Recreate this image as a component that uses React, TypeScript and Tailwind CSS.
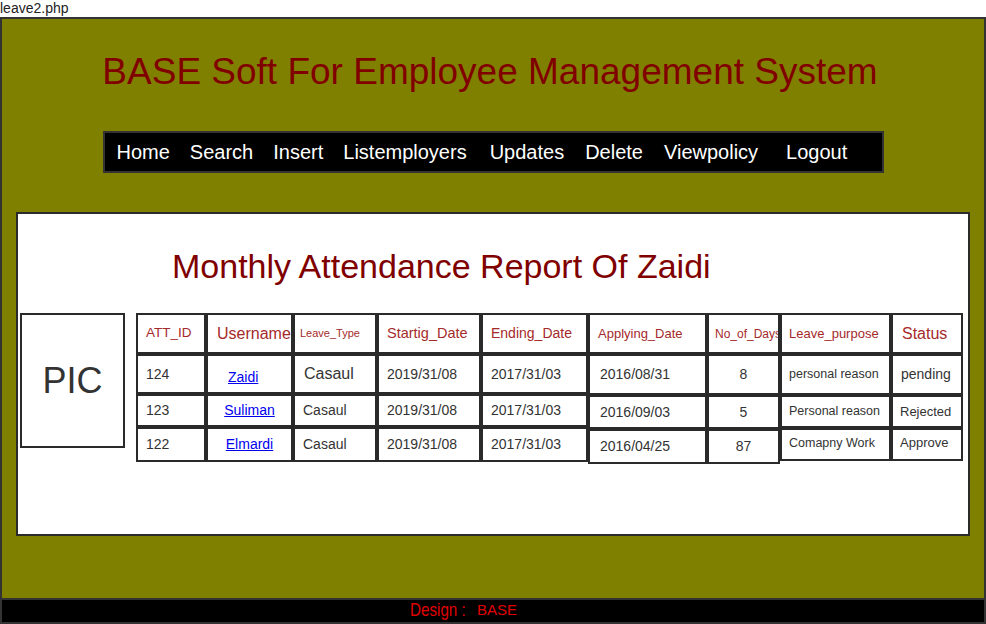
import React from 'react';

type Cell = { text: string; cls: string; link?: boolean };
type Col = { w: string; head: Cell; cells: Cell[] };
type Group = { rows: string[]; cols: Col[] };

const headCls = 'text-[#a52a2a]';
const dataCls = 'text-[#333]';

const groups: Group[] = [
  {
    rows: ['h-[41px]', 'h-[40px]', 'h-[33px]', 'h-[35px]'],
    cols: [
      {
        w: 'w-[70px]',
        head: { text: 'ATT_ID', cls: 'text-[13.5px] pl-[8px]' },
        cells: [
          { text: '124', cls: 'text-[14px] pl-[8px]' },
          { text: '123', cls: 'text-[14px] pl-[8px]' },
          { text: '122', cls: 'text-[14px] pl-[8px]' },
        ],
      },
      {
        w: 'w-[87px]',
        head: { text: 'Username', cls: 'text-[16px] pl-[9px]' },
        cells: [
          { text: 'Zaidi', cls: 'text-[14px] pl-[20px] pt-[6px]', link: true },
          { text: 'Suliman', cls: 'text-[14px] justify-center', link: true },
          { text: 'Elmardi', cls: 'text-[14px] justify-center', link: true },
        ],
      },
      {
        w: 'w-[84px]',
        head: { text: 'Leave_Type', cls: 'text-[11px] pl-[5px]' },
        cells: [
          { text: 'Casaul', cls: 'text-[16px] pl-[9px]' },
          { text: 'Casaul', cls: 'text-[14px] pl-[8px]' },
          { text: 'Casaul', cls: 'text-[14px] pl-[8px]' },
        ],
      },
      {
        w: 'w-[104px]',
        head: { text: 'Startig_Date', cls: 'text-[14.5px] pl-[8px]' },
        cells: [
          { text: '2019/31/08', cls: 'text-[14px] pl-[8px]' },
          { text: '2019/31/08', cls: 'text-[14px] pl-[8px]' },
          { text: '2019/31/08', cls: 'text-[14px] pl-[8px]' },
        ],
      },
      {
        w: 'w-[107px]',
        head: { text: 'Ending_Date', cls: 'text-[14px] pl-[8px]' },
        cells: [
          { text: '2017/31/03', cls: 'text-[14px] pl-[8px]' },
          { text: '2017/31/03', cls: 'text-[14px] pl-[8px]' },
          { text: '2017/31/03', cls: 'text-[14px] pl-[8px]' },
        ],
      },
    ],
  },
  {
    rows: ['h-[41px]', 'h-[41px]', 'h-[34px]', 'h-[35px]'],
    cols: [
      {
        w: 'w-[119px]',
        head: { text: 'Applying_Date', cls: 'text-[13px] pl-[8px]' },
        cells: [
          { text: '2016/08/31', cls: 'text-[14px] pl-[10px]' },
          { text: '2016/09/03', cls: 'text-[14px] pl-[10px]' },
          { text: '2016/04/25', cls: 'text-[14px] pl-[10px]' },
        ],
      },
      {
        w: 'w-[73px]',
        head: { text: 'No_of_Days', cls: 'text-[12px] pl-[6px]' },
        cells: [
          { text: '8', cls: 'text-[14px] justify-center' },
          { text: '5', cls: 'text-[14px] justify-center' },
          { text: '87', cls: 'text-[14px] justify-center' },
        ],
      },
    ],
  },
  {
    rows: ['h-[41px]', 'h-[41px]', 'h-[33px]', 'h-[33px]'],
    cols: [
      {
        w: 'w-[111px]',
        head: { text: 'Leave_purpose', cls: 'text-[13px] pl-[7px]' },
        cells: [
          { text: 'personal reason', cls: 'text-[12.5px] pl-[7px]' },
          { text: 'Personal reason', cls: 'text-[12.5px] pl-[7px]' },
          { text: 'Comapny Work', cls: 'text-[12.5px] pl-[7px] pb-[3px]' },
        ],
      },
      {
        w: 'w-[72px]',
        head: { text: 'Status', cls: 'text-[16px] pl-[9px]' },
        cells: [
          { text: 'pending', cls: 'text-[14px] pl-[8px]' },
          { text: 'Rejected', cls: 'text-[13px] pl-[7px]' },
          { text: 'Approve', cls: 'text-[13px] pl-[7px] pb-[3px]' },
        ],
      },
    ],
  },
];

const navItems = [
  { label: 'Home', cls: '' },
  { label: 'Search', cls: '' },
  { label: 'Insert', cls: '' },
  { label: 'Listemployers', cls: '' },
  { label: 'Updates', cls: 'ml-[3px]' },
  { label: 'Delete', cls: 'ml-[1px]' },
  { label: 'Viewpolicy', cls: 'ml-[1px]' },
  { label: 'Logout', cls: 'ml-[8px]' },
];

function TableGroup({ group }: { group: Group }) {
  return (
    <div className="flex">
      {group.cols.map((col) => (
        <div key={col.head.text} className={`flex flex-col ${col.w}`}>
          <div
            className={`flex items-center overflow-hidden whitespace-nowrap border-2 border-[#2a2a2a] ${group.rows[0]} ${headCls} ${col.head.cls}`}
          >
            {col.head.text}
          </div>
          {col.cells.map((c, i) => (
            <div
              key={i}
              className={`flex items-center overflow-hidden whitespace-nowrap border-2 border-[#2a2a2a] ${group.rows[i + 1]} ${dataCls} ${c.cls}`}
            >
              {c.link ? (
                <a href="#" className="text-[#0000ee] underline">
                  {c.text}
                </a>
              ) : (
                c.text
              )}
            </div>
          ))}
        </div>
      ))}
    </div>
  );
}

export default function App() {
  return (
    <div className="min-h-screen bg-white font-['Liberation_Sans',Arial,sans-serif]">
      <div className="h-[17px] text-[14px] leading-[17px] text-[#222]">leave2.php</div>

      <div className="h-[581px] border-2 border-b-0 border-[#333] bg-[#808000]">
        <h1 className="mt-[32px] pr-[6px] text-center text-[37px] font-normal leading-[42px] text-[#800000]">
          BASE Soft For Employee Management System
        </h1>

        <nav className="mx-auto mt-[38px] flex h-[42px] w-[781px] items-center border-2 border-[#333] bg-black pl-[2px] text-[20px] text-white">
          {navItems.map((n) => (
            <a key={n.label} href="#" className={`px-[10px] ${n.cls}`}>
              {n.label}
            </a>
          ))}
        </nav>

        <div className="mx-[14px] mt-[39px] h-[324px] border-2 border-[#2b2b2b] bg-white">
          <h2 className="mt-[33px] pl-[154px] text-[34px] font-normal leading-[39px] text-[#800000]">
            Monthly Attendance Report Of Zaidi
          </h2>

          <div className="mt-[27px] flex items-start pl-[2px]">
            <div className="flex h-[135px] w-[105px] items-center justify-center border-2 border-[#2a2a2a] text-[36px] text-[#333]">
              PIC
            </div>
            <div className="ml-[11px] flex items-start">
              {groups.map((g, i) => (
                <TableGroup key={i} group={g} />
              ))}
            </div>
          </div>
        </div>
      </div>

      <footer className="flex h-[26px] items-start border-2 border-[#333] bg-black pl-[408px] text-[#e00000]">
        <span className="inline-block w-[58px] origin-left scale-x-[0.8] whitespace-nowrap text-[19px] leading-[20px]">
          Design :
        </span>
        <span className="ml-[9px] text-[15px] leading-[20px]">BASE</span>
      </footer>
    </div>
  );
}
